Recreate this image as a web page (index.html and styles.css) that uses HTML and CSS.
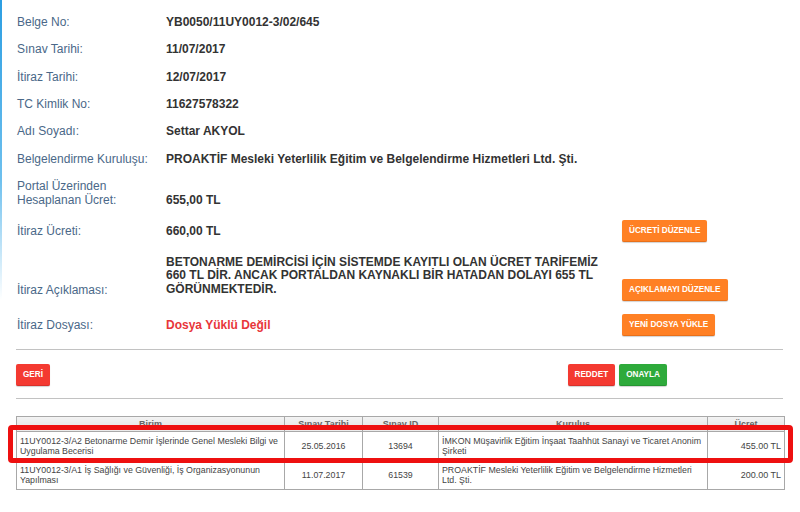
FILE: index.html
```html
<!DOCTYPE html>
<html lang="tr">
<head>
<meta charset="utf-8">
<title>İtiraz Ücret Kontrolü</title>
<link rel="stylesheet" href="styles.css">
</head>
<body>
<div class="page">
  <h1 class="title">İtiraz Ücret Kontrolü</h1>
  <div class="form">
    <div class="row"><div class="lbl">Belge No:</div><div class="val">YB0050/11UY0012-3/02/645</div></div>
    <div class="row"><div class="lbl">Sınav Tarihi:</div><div class="val">11/07/2017</div></div>
    <div class="row"><div class="lbl">İtiraz Tarihi:</div><div class="val">12/07/2017</div></div>
    <div class="row"><div class="lbl">TC Kimlik No:</div><div class="val">11627578322</div></div>
    <div class="row"><div class="lbl">Adı Soyadı:</div><div class="val">Settar AKYOL</div></div>
    <div class="row"><div class="lbl">Belgelendirme Kuruluşu:</div><div class="val">PROAKTİF Mesleki Yeterlilik Eğitim ve Belgelendirme Hizmetleri Ltd. Şti.</div></div>
    <div class="row row-end"><div class="lbl">Portal Üzerinden<br>Hesaplanan Ücret:</div><div class="val">655,00 TL</div></div>
    <div class="row"><div class="lbl">İtiraz Ücreti:</div><div class="val">660,00 TL</div><div><button class="btn btn-orange">ÜCRETİ DÜZENLE</button></div></div>
    <div class="row row-desc"><div class="lbl">İtiraz Açıklaması:</div><div class="val desc">BETONARME DEMİRCİSİ İÇİN SİSTEMDE KAYITLI OLAN ÜCRET TARİFEMİZ 660 TL DİR. ANCAK PORTALDAN KAYNAKLI BİR HATADAN DOLAYI 655 TL GÖRÜNMEKTEDİR.</div><div class="btn-cell"><button class="btn btn-orange">AÇIKLAMAYI DÜZENLE</button></div></div>
    <div class="row"><div class="lbl">İtiraz Dosyası:</div><div class="val val-red">Dosya Yüklü Değil</div><div><button class="btn btn-orange">YENİ DOSYA YÜKLE</button></div></div>
  </div>
  <div class="sep"></div>
  <div class="actions">
    <button class="btn btn-red">GERİ</button>
    <div class="actions-right">
      <button class="btn btn-red">REDDET</button>
      <button class="btn btn-green">ONAYLA</button>
    </div>
  </div>
  <div class="sep sep-2"></div>
  <div class="table-wrap">
    <table class="grid">
      <colgroup>
        <col class="c-birim"><col class="c-tarih"><col class="c-id"><col class="c-kurulus"><col class="c-ucret">
      </colgroup>
      <thead>
        <tr><th>Birim</th><th>Sınav Tarihi</th><th>Sınav ID</th><th>Kuruluş</th><th>Ücret</th></tr>
      </thead>
      <tbody>
        <tr>
          <td>11UY0012-3/A2 Betonarme Demir İşlerinde Genel Mesleki Bilgi ve Uygulama Becerisi</td>
          <td class="ctr">25.05.2016</td>
          <td class="ctr">13694</td>
          <td>İMKON Müşavirlik Eğitim İnşaat Taahhüt Sanayi ve Ticaret Anonim Şirketi</td>
          <td class="rgt">455.00 TL</td>
        </tr>
        <tr>
          <td>11UY0012-3/A1 İş Sağlığı ve Güvenliği, İş Organizasyonunun Yapılması</td>
          <td class="ctr">11.07.2017</td>
          <td class="ctr">61539</td>
          <td>PROAKTİF Mesleki Yeterlilik Eğitim ve Belgelendirme Hizmetleri Ltd. Şti.</td>
          <td class="rgt">200.00 TL</td>
        </tr>
      </tbody>
    </table>
    <div class="highlight"></div>
  </div>
</div>
</body>
</html>
```

FILE: styles.css
```css
html, body {
  margin: 0;
  padding: 0;
}
body {
  background: #fff linear-gradient(to bottom, #2c9ee2 0, #6ec0ee 180px, rgba(255,255,255,0) 300px) no-repeat 0 0 / 2px 300px;
  font-family: "Liberation Sans", Arial, sans-serif;
  color: #333;
  overflow: hidden;
  height: 512px;
}
.page {
  padding: 0 16px;
}
.title {
  margin: -16px 0 0;
  height: 20px;
  line-height: 20px;
  font-size: 15px;
  font-weight: bold;
  color: #5a7c9c;
  text-align: center;
  padding-left: 6px;
}
.form {
  margin-top: 11px;
  display: flex;
  flex-direction: column;
  gap: 13.33px;
}
.row {
  display: grid;
  grid-template-columns: 150px 456px auto;
  align-items: center;
  font-size: 12px;
  line-height: 14px;
}
.row-end {
  align-items: end;
}
.lbl {
  color: #4a6888;
  padding-left: 1px;
}
.val {
  font-weight: bold;
  color: #333;
}
.val-red {
  color: #e8363a;
}
.row-desc {
  align-items: end;
}
.row-desc .desc {
  align-self: start;
  line-height: 13.5px;
  margin-bottom: 4.5px;
  padding-right: 8px;
}
.row-desc .lbl {
  margin-bottom: 4px;
}
.btn {
  font-family: "Liberation Sans", Arial, sans-serif;
  font-size: 8.2px;
  font-weight: bold;
  color: #fff;
  border: 0;
  border-radius: 2px;
  height: 22px;
  padding: 0 7px;
  margin: 0;
  line-height: 22px;
  cursor: pointer;
  box-shadow: 0 1px 1px rgba(0,0,0,0.18);
  vertical-align: top;
}
.btn-orange {
  background: #ff8024;
  border-bottom: 1px solid #e8701a;
}
.btn-red {
  background: #f43a31;
  border-bottom: 1px solid #d9302a;
}
.btn-green {
  background: #2eaa3b;
  border-bottom: 1px solid #269532;
}
.sep {
  border-top: 1px solid #c2c2c2;
  margin: 13px 1px 0 0;
}
.actions {
  display: flex;
  margin-top: 14px;
  height: 22px;
}
.actions-right {
  margin-left: auto;
  margin-right: 117px;
  display: flex;
  gap: 4px;
}
.sep-2 {
  margin-top: 12px;
}
.table-wrap {
  position: relative;
  margin-top: 17px;
}
.grid {
  width: 768px;
  border-collapse: collapse;
  table-layout: fixed;
  font-size: 8.8px;
  line-height: 10px;
  color: #444;
}
.c-birim { width: 268px; }
.c-tarih { width: 78px; }
.c-id { width: 76px; }
.c-kurulus { width: 269px; }
.c-ucret { width: 77px; }
.grid th {
  background: linear-gradient(to bottom, #f4f4f4, #e2e2e2);
  border: 1px solid #a8a8a8;
  font-weight: bold;
  color: #666;
  height: 14px;
  padding: 0 3px;
  font-size: 9px;
  text-align: center;
}
.grid td {
  border: 1px solid #a8a8a8;
  padding: 4px 3px 4px 3px;
  vertical-align: middle;
  height: 20px;
}
.grid td.ctr { text-align: center; }
.grid td.rgt { text-align: right; padding-right: 3px; font-size: 9px; }
.highlight {
  position: absolute;
  left: -8.5px;
  top: 9px;
  width: 775px;
  height: 28px;
  border: 5px solid #ee1010;
  border-radius: 4px;
  pointer-events: none;
}
```
